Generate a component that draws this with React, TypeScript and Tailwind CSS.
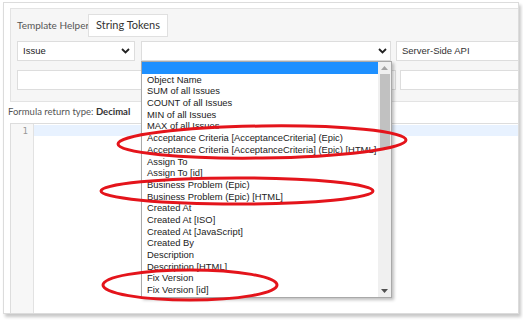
import React from "react";

const items = [
  "",
  "Object Name",
  "SUM of all Issues",
  "COUNT of all Issues",
  "MIN of all Issues",
  "MAX of all Issues",
  "Acceptance Criteria [AcceptanceCriteria] (Epic)",
  "Acceptance Criteria [AcceptanceCriteria] (Epic) [HTML]",
  "Assign To",
  "Assign To [id]",
  "Business Problem (Epic)",
  "Business Problem (Epic) [HTML]",
  "Created At",
  "Created At [ISO]",
  "Created At [JavaScript]",
  "Created By",
  "Description",
  "Description [HTML]",
  "Fix Version",
  "Fix Version [id]",
];

function Chevron() {
  return (
    <svg width="9" height="6" viewBox="0 0 9 6" className="shrink-0">
      <path d="M1 1 L4.5 4.5 L8 1" fill="none" stroke="#222" strokeWidth="1.8" />
    </svg>
  );
}

export default function App() {
  return (
    <div className="relative w-[523px] h-[321px] bg-white overflow-hidden">
      <div className="ml-[3px] mt-[2px] w-[516px] h-[312px] border border-[#dcdcdc] bg-white shadow-[2px_3px_3px_rgba(0,0,0,0.22)] overflow-hidden">
        <div className="pl-[6px] pt-[5px]">
          {/* panel */}
          <div className="w-[520px] h-[94px] border border-[#e3e3e3] bg-[#f6f6f6] pl-[6px] pt-[5px] flex flex-col">
            <div className="flex items-center h-[23px]">
              <span className="text-[10px] text-[#555] font-['Lato',sans-serif] w-[71px] whitespace-nowrap">Template Helper</span>
              <div className="h-[23px] w-[80px] border border-[#e0e0e0] bg-white flex items-center justify-center text-[11px] text-[#333] font-['Lato',sans-serif]">
                String Tokens
              </div>
            </div>
            <div className="flex mt-[4px] h-[20px]">
              <div className="w-[118px] h-[20px] border border-[#ddd] bg-white flex items-center justify-between pl-[5px] pr-[4px] text-[9.5px] text-[#222] font-['Liberation_Sans',sans-serif]">
                <span>Issue</span>
                <Chevron />
              </div>
              <div className="ml-[6px] w-[250px] h-[20px] border border-[#ddd] bg-white flex items-center justify-end pr-[3px]">
                <Chevron />
              </div>
              <div className="ml-[5px] w-[130px] h-[20px] border border-[#ddd] bg-white flex items-center pl-[5px] text-[9.5px] text-[#333] font-['Liberation_Sans',sans-serif]">
                Server-Side API
              </div>
            </div>
            <div className="flex mt-[9px] h-[20px]">
              <div className="w-[380px] h-[20px] border border-[#ddd] bg-white" />
              <div className="ml-[4px] w-[130px] h-[20px] border border-[#ddd] bg-white" />
            </div>
          </div>
        </div>
        <div className="pl-[4px] h-[21px] flex items-center text-[9.5px] text-[#555] font-['Lato',sans-serif] whitespace-nowrap">
          Formula return type:&nbsp;<span className="font-bold text-[#333]">Decimal</span>
        </div>
        {/* editor */}
        <div className="ml-[6px] w-[520px] h-[200px] border border-[#ddd] bg-white flex">
          <div className="w-[23px] h-full bg-[#f7f7f7] border-r border-[#e2e2e2] flex justify-end pr-[5px] pt-[1px]">
            <span className="text-[9px] leading-[12px] text-[#999] font-['DejaVu_Sans_Mono',monospace]">1</span>
          </div>
          <div className="flex-1 pt-[1px]">
            <div className="h-[11px] bg-[#e8f2ff]" />
          </div>
        </div>
      </div>

      {/* dropdown */}
      <div className="absolute left-[141px] top-[61px] w-[251px] h-[237px] border border-[#a9a9a9] bg-white shadow-[2px_2px_3px_rgba(0,0,0,0.25)] flex">
        <div className="flex-1 min-w-0 overflow-hidden flex flex-col font-['Liberation_Sans',sans-serif] text-[9.4px] text-[#222]">
          {items.map((t, i) => (
            <div
              key={i}
              className={
                i === 0
                  ? "h-[11.7px] leading-[11.7px] bg-[#1e90ff] pl-[5px] shrink-0"
                  : "h-[11.7px] leading-[11.7px] pl-[5px] whitespace-nowrap shrink-0"
              }
            >
              {t}
            </div>
          ))}
        </div>
        <div className="w-[13px] shrink-0 h-full bg-[#f0f0f0] flex flex-col items-center">
          <div className="h-[12px] flex items-center justify-center">
            <svg width="7" height="4" viewBox="0 0 7 4">
              <path d="M0 4 L3.5 0 L7 4 Z" fill="#a3a3a3" />
            </svg>
          </div>
          <div className="w-[10px] h-[74px] bg-[#c1c1c1]" />
          <div className="flex-1" />
          <div className="h-[12px] flex items-center justify-center">
            <svg width="7" height="4" viewBox="0 0 7 4">
              <path d="M0 0 L3.5 4 L7 0 Z" fill="#505050" />
            </svg>
          </div>
        </div>
      </div>

      {/* red annotations */}
      <svg className="absolute left-0 top-0 pointer-events-none" width="523" height="321" viewBox="0 0 523 321">
        <ellipse cx="262" cy="142" rx="144" ry="16" fill="none" stroke="#e4141b" strokeWidth="3" transform="rotate(-0.8 262 142)" />
        <ellipse cx="237" cy="191" rx="136" ry="13" fill="none" stroke="#e4141b" strokeWidth="3" />
        <ellipse cx="190" cy="285" rx="87" ry="15" fill="none" stroke="#e4141b" strokeWidth="3" />
      </svg>
    </div>
  );
}
